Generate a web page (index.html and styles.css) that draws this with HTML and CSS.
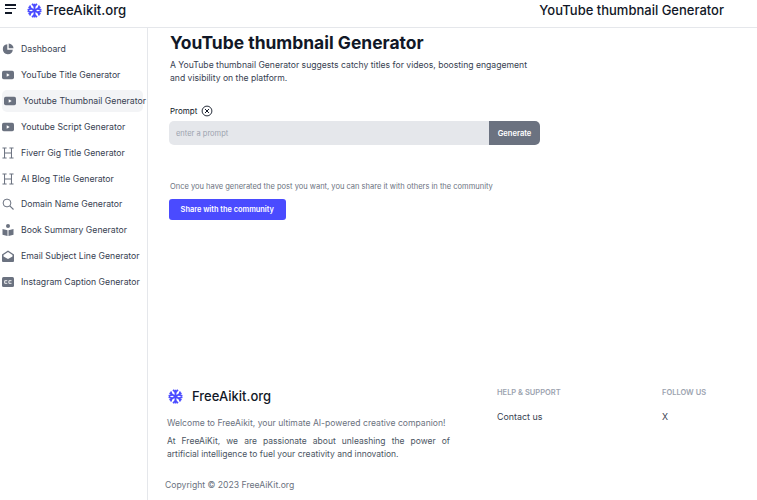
FILE: index.html
```html
<!DOCTYPE html>
<html lang="en">
<head>
    <meta charset="UTF-8">
    <meta name="viewport" content="width=device-width, initial-scale=1.0">
    <title>YouTube thumbnail Generator</title>
    <link rel="stylesheet" href="styles.css">
</head>
<body>

<svg class="sprites" width="0" height="0">
    <symbol id="logo" viewBox="0 0 24 24">
        <g stroke="#4a4bff" fill="none">
            <path d="M12 1v22M2.500 6.500l19 11M21.500 6.500l-19 11" stroke-width="3"/>
            <path d="M8 1.500 12 5.500l4-4M8 22.500l4-4 4 4" stroke-width="2.600"/>
            <path d="M1 11 6 9.500 4.500 4M23 11 18 9.500 19.500 4M1 13l5 1.500L4.500 20M23 13l-5 1.500 1.500 5.500" stroke-width="2.600"/>
        </g>
    </symbol>
    <symbol id="video" viewBox="0 0 14 12">
        <rect y="1" width="14" height="10" rx="2" fill="#6b7280"/>
        <path d="M5.500 4v4l3.500-2z" fill="#fff"/>
    </symbol>
    <symbol id="heading" viewBox="0 0 12 13">
        <path d="M0 1h4.500M0 12h4.500M2.250 1v11M7.500 1H12M7.500 12H12M9.750 1v11M2.250 6.500h7.500" stroke="#6b7280" stroke-width="1.100" fill="none"/>
    </symbol>
</svg>

<header class="topbar">
    <div class="brand">
        <span class="burger"><i></i><i></i><i></i></span>
        <svg class="logo"><use href="#logo"/></svg>
        <span class="brand-name">FreeAikit.org</span>
    </div>
    <div class="page-name">YouTube thumbnail Generator</div>
</header>

<div class="layout">
    <nav class="sidebar">
        <a class="nav-item">
            <svg class="nav-icon" viewBox="0 0 12 12"><path d="M5.300 1.200a5 5 0 1 0 5.500 5.500H5.300z" fill="#6b7280"/><path d="M6.700.5v4.800h4.800A4.900 4.900 0 0 0 6.700.5z" fill="#6b7280"/></svg>
            Dashboard
        </a>
        <a class="nav-item"><svg class="nav-icon"><use href="#video"/></svg>YouTube Title Generator</a>
        <a class="nav-item active"><svg class="nav-icon"><use href="#video"/></svg>Youtube Thumbnail Generator</a>
        <a class="nav-item"><svg class="nav-icon"><use href="#video"/></svg>Youtube Script Generator</a>
        <a class="nav-item"><svg class="nav-icon"><use href="#heading"/></svg>Fiverr Gig Title Generator</a>
        <a class="nav-item"><svg class="nav-icon"><use href="#heading"/></svg>AI Blog Title Generator</a>
        <a class="nav-item">
            <svg class="nav-icon" viewBox="0 0 12 12"><circle cx="5" cy="5" r="3.900" fill="none" stroke="#6b7280" stroke-width="1"/><path d="m7.800 7.800 3.700 3.700" stroke="#6b7280" stroke-width="1.100"/></svg>
            Domain Name Generator
        </a>
        <a class="nav-item">
            <svg class="nav-icon" viewBox="0 0 12 12"><circle cx="6" cy="2" r="2" fill="#6b7280"/><path d="M.5 5l5 1.200V12l-5-1.200zM11.500 5l-5 1.200V12l5-1.200z" fill="#6b7280"/></svg>
            Book Summary Generator
        </a>
        <a class="nav-item">
            <svg class="nav-icon" viewBox="0 0 12 12"><path d="M6 .5 12 4.500V11a1 1 0 0 1-1 1H1a1 1 0 0 1-1-1V4.500z" fill="#6b7280"/><path d="M1.500 5 6 2l4.500 3v1.500L6 9 1.500 6.500z" fill="#fff"/></svg>
            Email Subject Line Generator
        </a>
        <a class="nav-item">
            <svg class="nav-icon" viewBox="0 0 12 12"><rect y="1" width="12" height="10" rx="1.500" fill="#6b7280"/><path d="M5.300 4.700H2.700v2.600h2.600M9.500 4.700H6.900v2.600h2.600" fill="none" stroke="#fff" stroke-width=".9"/></svg>
            Instagram Caption Generator
        </a>
    </nav>

    <div class="content">
        <main class="tool">
            <h1>YouTube thumbnail Generator</h1>
            <p class="intro">A YouTube thumbnail Generator suggests catchy titles for videos, boosting engagement and visibility on the platform.</p>

            <div class="prompt-label">
                <span>Prompt</span>
                <svg class="clear-icon" viewBox="0 0 12 12"><circle cx="6" cy="6" r="4.900" fill="none" stroke="#111827" stroke-width=".9"/><path d="m4 4 4 4m0-4-4 4" stroke="#111827" stroke-width="1"/></svg>
            </div>
            <div class="prompt-group">
                <input class="prompt-input" type="text" placeholder="enter a prompt">
                <button class="generate">Generate</button>
            </div>

            <p class="share-note">Once you have generated the post you want, you can share it with others in the community</p>
            <button class="share">Share with the community</button>
        </main>

        <footer class="footer">
            <div class="footer-top">
                <div class="footer-about">
                    <div class="footer-brand">
                        <svg class="footer-logo"><use href="#logo"/></svg>
                        <span>FreeAikit.org</span>
                    </div>
                    <p class="welcome">Welcome to FreeAikit, your ultimate AI-powered creative companion!</p>
                    <p class="mission">At FreeAiKit, we are passionate about unleashing the power of artificial intelligence to fuel your creativity and innovation.</p>
                </div>
                <div class="footer-col help">
                    <h2>HELP &amp; SUPPORT</h2>
                    <a>Contact us</a>
                </div>
                <div class="footer-col">
                    <h2>FOLLOW US</h2>
                    <a>X</a>
                </div>
            </div>
            <div class="copyright">Copyright © 2023 FreeAiKit.org</div>
        </footer>
    </div>
</div>

</body>
</html>
```

FILE: styles.css
```css
body {
    font-family: 'Inter', sans-serif;
    background-color: #ffffff;
    color: #111827;
    margin: 0;
    height: 500px;
    overflow: hidden;
}
.sprites {
    display: block;
    height: 0;
}
.topbar {
    display: flex;
    justify-content: space-between;
    align-items: flex-start;
    height: 27px;
    border-bottom: 1px solid #e5e7eb;
}
.brand {
    display: flex;
    align-items: center;
    padding-left: 5px;
    height: 20px;
}
.burger {
    display: flex;
    flex-direction: column;
    gap: 2px;
    width: 11px;
    margin: -2px 11px 0 0;
}
.burger i {
    display: block;
    height: 1.500px;
    width: 11px;
    background: #111827;
}
.burger i:nth-child(3) {
    width: 7px;
    margin-top: 1px;
}
.logo {
    width: 15px;
    height: 15px;
    margin-right: 4px;
}
.brand-name {
    font-size: 13.200px;
    font-weight: 500;
}
.page-name {
    font-size: 13px;
    font-weight: 500;
    line-height: 20px;
    padding-right: 33px;
}
.layout {
    display: flex;
    height: 472px;
}
.sidebar {
    width: 147px;
    flex: none;
    border-right: 1px solid #e5e7eb;
    padding-top: 8.500px;
}
.nav-item {
    display: flex;
    align-items: center;
    height: 25.800px;
    padding-left: 2px;
    font-size: 8.700px;
    color: #374151;
    white-space: nowrap;
}
.nav-icon {
    width: 12px;
    height: 12px;
    margin-right: 7px;
    flex: none;
}
.active {
    margin-left: 2px;
    width: 141px;
    height: 22px;
    margin-top: 2px;
    margin-bottom: 2px;
    background: #f3f4f6;
    border-radius: 5px;
    padding-left: 2px;
    box-sizing: border-box;
}
.content {
    flex: 1;
    display: flex;
    flex-direction: column;
    justify-content: space-between;
    min-width: 0;
}
.tool {
    padding: 6px 0 0 21px;
    width: 371px;
}
h1 {
    font-size: 17.450px;
    font-weight: 700;
    margin: 0 0 0 1px;
    line-height: 18px;
}
.intro {
    font-size: 8.620px;
    line-height: 13px;
    color: #374151;
    margin: 7px 0 0 1px;
    width: 365px;
}
.prompt-label {
    display: flex;
    align-items: center;
    gap: 4px;
    font-size: 8px;
    margin: 19px 0 0 1px;
    height: 14px;
}
.clear-icon {
    width: 12px;
    height: 12px;
}
.prompt-group {
    display: flex;
    height: 24px;
    margin-top: 3px;
    border-radius: 5px;
    overflow: hidden;
}
.prompt-input {
    flex: 1;
    min-width: 0;
    border: none;
    background: #e5e7eb;
    padding: 0 7px;
    font-family: 'Inter', sans-serif;
    font-size: 7.500px;
    outline: none;
}
.prompt-input::placeholder {
    color: #9ca3af;
}
.generate {
    width: 51px;
    border: none;
    background: #6b7280;
    color: #ffffff;
    font-family: 'Inter', sans-serif;
    font-size: 7.600px;
    font-weight: 600;
    padding: 0;
}
.share-note {
    font-size: 7.530px;
    color: #6b7280;
    margin: 36px 0 0 1px;
    line-height: 12px;
    white-space: nowrap;
}
.share {
    display: block;
    width: 116.500px;
    height: 21px;
    margin-top: 6px;
    border: none;
    border-radius: 3px;
    background: #4a4bff;
    color: #ffffff;
    font-family: 'Inter', sans-serif;
    font-size: 7.400px;
    font-weight: 600;
    padding: 0;
}
.footer {
    padding: 0 0 9px 19px;
}
.footer-top {
    display: flex;
}
.footer-about {
    width: 283px;
}
.footer-brand {
    display: flex;
    align-items: center;
    gap: 9px;
    font-size: 13px;
    font-weight: 500;
    height: 18px;
}
.footer-logo {
    width: 15px;
    height: 15px;
    margin-left: 1px;
}
.welcome {
    font-size: 8.600px;
    color: #6b7280;
    margin: 12px 0 0;
    line-height: 12px;
    white-space: nowrap;
}
.mission {
    font-size: 8.500px;
    color: #4b5563;
    margin: 6px 0 0;
    line-height: 13px;
    text-align: justify;
}
.footer-col {
    padding-top: 1px;
}
.help {
    margin-left: 47px;
    width: 165px;
}
.footer-col h2 {
    font-size: 7.500px;
    font-weight: 600;
    color: #9ca3af;
    margin: 0;
    line-height: 10px;
}
.footer-col a {
    display: block;
    font-size: 8.900px;
    color: #374151;
    margin-top: 13px;
    line-height: 12px;
}
.copyright {
    font-size: 8.650px;
    color: #6b7280;
    margin: 18px 0 0 -2px;
    line-height: 12px;
}
```
